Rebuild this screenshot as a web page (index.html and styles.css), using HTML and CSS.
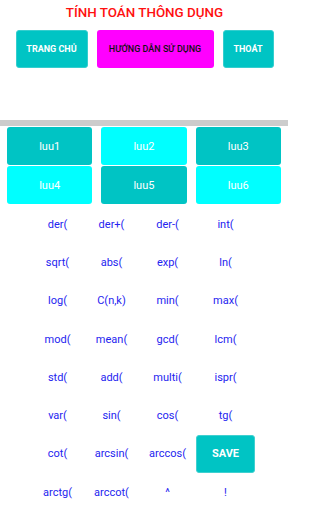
FILE: index.html
```html
<!DOCTYPE html>
<html>
<head>
<meta charset="utf-8">
<meta name="viewport" content="width=288">
<link rel="stylesheet" href="styles.css">
</head>
<body>
<div class="page">
<div class="title">TÍNH TOÁN THÔNG DỤNG</div>
<div class="nav">
  <div class="nbtn teal w1">TRANG CHỦ</div>
  <div class="nbtn magenta w2">HƯỚNG DẪN SỬ DỤNG</div>
  <div class="nbtn teal w3">THOÁT</div>
</div>
<div class="spacer"></div>
<div class="bar"></div>
<div class="mem">
  <div class="mbtn dark">luu1</div>
  <div class="mbtn light">luu2</div>
  <div class="mbtn dark">luu3</div>
  <div class="mbtn light">luu4</div>
  <div class="mbtn dark">luu5</div>
  <div class="mbtn light">luu6</div>
</div>
<div class="funcs">
  <div class="f">der(</div><div class="f">der+(</div><div class="f">der-(</div><div class="f">int(</div>
  <div class="f">sqrt(</div><div class="f">abs(</div><div class="f">exp(</div><div class="f">ln(</div>
  <div class="f">log(</div><div class="f">C(n,k)</div><div class="f">min(</div><div class="f">max(</div>
  <div class="f">mod(</div><div class="f">mean(</div><div class="f">gcd(</div><div class="f">lcm(</div>
  <div class="f">std(</div><div class="f">add(</div><div class="f">multi(</div><div class="f">ispr(</div>
  <div class="f">var(</div><div class="f">sin(</div><div class="f">cos(</div><div class="f">tg(</div>
  <div class="f">cot(</div><div class="f">arcsin(</div><div class="f">arccos(</div><div class="f save"><span>SAVE</span></div>
  <div class="f">arctg(</div><div class="f">arccot(</div><div class="f">^</div><div class="f">!</div>
</div>
</div>
</body>
</html>
```
FILE: styles.css
```css
html, body {
  margin: 0;
  padding: 0;
  background: #ffffff;
  font-family: Roboto, "Noto Sans", sans-serif;
}
.page {
  width: 288px;
  overflow: hidden;
}
.title {
  height: 24px;
  display: flex;
  align-items: center;
  justify-content: center;
  color: #ff1010;
  font-weight: 500;
  font-size: 13.4px;
  padding-left: 1px;
}
.nav {
  display: flex;
  justify-content: center;
  gap: 9px;
  margin-top: 6px;
  padding-left: 1px;
}
.nbtn {
  height: 38px;
  border-radius: 3px;
  display: flex;
  align-items: center;
  justify-content: center;
  font-size: 9px;
  font-weight: bold;
  box-sizing: border-box;
  white-space: nowrap;
}
.teal {
  background: #00c4c4;
  color: #ffffff;
  border: 1px solid #35cece;
}
.magenta {
  background: #ff00ff;
  color: #111111;
  font-weight: 500;
}
.w1 { width: 72px; }
.w2 { width: 117px; }
.w3 { width: 51px; }
.spacer { height: 52px; }
.bar {
  height: 6px;
  background: #cccccc;
}
.mem {
  display: grid;
  grid-template-columns: repeat(3, 85.3px);
  grid-auto-rows: 38px;
  column-gap: 9px;
  row-gap: 1px;
  padding-left: 7px;
  margin-top: 1px;
}
.mbtn {
  border-radius: 3px;
  display: flex;
  align-items: center;
  justify-content: center;
  color: #ffffff;
  font-size: 11px;
}
.dark { background: #00c4c4; }
.light { background: #00ffff; }
.funcs {
  display: grid;
  grid-template-columns: 53px 55px 57px 59px;
  grid-auto-rows: 38.3px;
  padding-left: 31px;
  margin-top: 1px;
}
.f {
  display: flex;
  align-items: center;
  justify-content: center;
  color: #2424f0;
  font-size: 11px;
  white-space: nowrap;
}
.save span {
  width: 59px;
  height: 38px;
  border-radius: 3px;
  background: #00c4c4;
  border: 1px solid #40d0d0;
  box-sizing: border-box;
  color: #ffffff;
  font-weight: bold;
  font-size: 11px;
  display: flex;
  align-items: center;
  justify-content: center;
}
```
